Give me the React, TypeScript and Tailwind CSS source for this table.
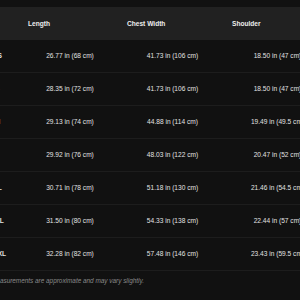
import React from "react";

const rows = [
  ["XS", "26.77 in (68 cm)", "41.73 in (106 cm)", "18.50 in (47 cm)"],
  ["S", "28.35 in (72 cm)", "41.73 in (106 cm)", "18.50 in (47 cm)"],
  ["M", "29.13 in (74 cm)", "44.88 in (114 cm)", "19.49 in (49.5 cm)"],
  ["L", "29.92 in (76 cm)", "48.03 in (122 cm)", "20.47 in (52 cm)"],
  ["XL", "30.71 in (78 cm)", "51.18 in (130 cm)", "21.46 in (54.5 cm)"],
  ["XXL", "31.50 in (80 cm)", "54.33 in (138 cm)", "22.44 in (57 cm)"],
  ["XXXL", "32.28 in (82 cm)", "57.48 in (146 cm)", "23.43 in (59.5 cm)"],
];

export default function App() {
  return (
    <div
      className="w-[300px] h-[300px] overflow-hidden bg-[#111111]"
      style={{ fontFamily: '"Liberation Sans", Arial, sans-serif' }}
    >
      <div className="ml-[-21px] w-[360px] pt-[7px]">
        <div className="grid grid-cols-[41px_100px_105px_114px] h-[33px] items-center bg-[#212121] text-[6.6px] font-bold text-[#eeeeee]">
          <div className="pl-[5px]">Size</div>
          <div className="pl-2">Length</div>
          <div className="pl-[7px]">Chest Width</div>
          <div className="pl-[7px]">Shoulder</div>
        </div>
        {rows.map((r) => (
          <div
            key={r[0]}
            className="grid grid-cols-[41px_100px_105px_114px] h-[33px] items-center border-b border-[#1d1d1d] text-[6.6px] text-[#e2e2e2]"
          >
            <div className="text-center font-bold pr-[4px]">{r[0]}</div>
            <div className="text-center">{r[1]}</div>
            <div className="text-center">{r[2]}</div>
            <div className="text-center pr-[9px] whitespace-nowrap">{r[3]}</div>
          </div>
        ))}
        <div className="pl-[12px] pt-[5px] text-[6.4px] leading-[10px] italic text-[#8a8a8a]">
          Measurements are approximate and may vary slightly.
        </div>
      </div>
    </div>
  );
}
